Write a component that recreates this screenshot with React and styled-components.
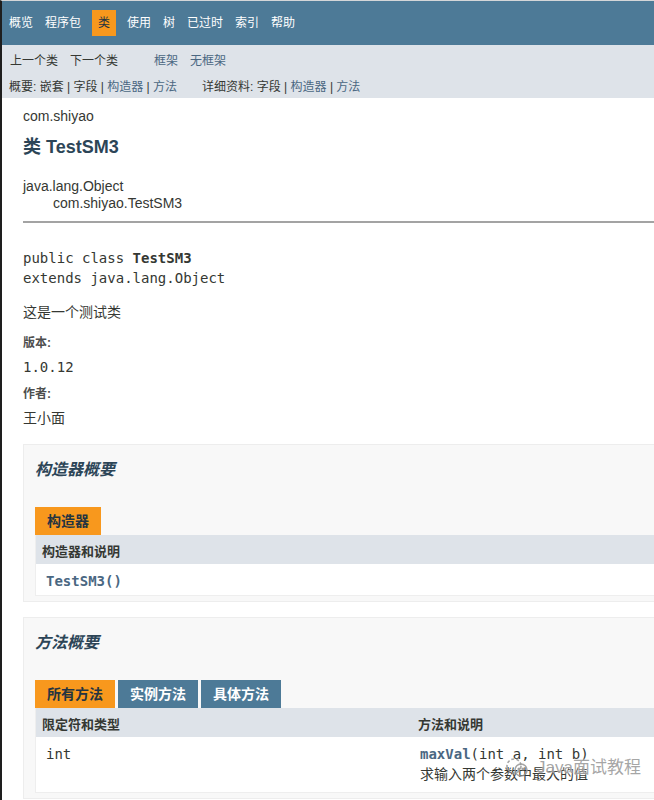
import React from "react";
import styled, { createGlobalStyle } from "styled-components";

const GlobalStyle = createGlobalStyle`
  html, body {
    margin: 0;
    padding: 0;
    overflow-x: hidden;
    background: #ffffff;
  }
`;

const sans = `"Liberation Sans", Arial, "Noto Sans CJK SC", sans-serif`;
const mono = `"DejaVu Sans Mono", "Noto Sans CJK SC", monospace`;

const Page = styled.div`
  position: relative;
  min-height: 800px;
  overflow: hidden;
  border-left: 2px solid #1e1e1e;
  border-top: 1px solid #d4d6d8;
  font-family: ${sans};
  font-size: 14px;
  color: #353833;
  background: #ffffff;
`;

const TopNav = styled.ul`
  display: flex;
  align-items: center;
  height: 44px;
  margin: 0;
  padding: 0 0 0 1px;
  list-style: none;
  background: #4d7a97;
`;

const NavItem = styled.li`
  padding: 5px 6px;
  margin: ${(p) => (p.$current ? "0 5px" : "0")};
  font-size: 12px;
  line-height: 16px;
  color: ${(p) => (p.$current ? "#253441" : "#ffffff")};
  background: ${(p) => (p.$current ? "#f8981d" : "transparent")};
`;

const SubNav = styled.div`
  background: #dee3e9;
  padding: 9px 0 3px;
`;

const SubNavRow = styled.div`
  display: flex;
  font-size: 12px;
  line-height: 15px;
  padding-left: ${(p) => p.$indent || 0}px;
  margin-top: ${(p) => p.$gap || 0}px;
`;

const SubNavItem = styled.span`
  padding: 0 6px;
  margin-left: ${(p) => p.$push || 0}px;
  color: ${(p) => (p.$link ? "#4a6782" : "#353833")};
`;

const Group = styled.span`
  margin-left: ${(p) => p.$push || 0}px;
  white-space: pre;
`;

const A = styled.span`
  color: ${(p) => (p.$link ? "#4a6782" : "#353833")};
`;

const Content = styled.main`
  padding: 10px 0 0 21px;
`;

const PackageLabel = styled.div`
  line-height: 16px;
`;

const Title = styled.h2`
  margin: 12px 0 0;
  font-size: 18px;
  line-height: 22px;
  font-weight: bold;
  color: #2c4557;
`;

const Inheritance = styled.div`
  margin-top: 20px;
  line-height: 17px;
`;

const Indent = styled.div`
  padding-left: 30px;
`;

const Rule = styled.hr`
  margin: 9px 0 0;
  border: none;
  border-top: 2px solid #a3a3a3;
  height: 0;
`;

const Signature = styled.pre`
  margin: 25px 0 0;
  font-family: ${mono};
  font-size: 14px;
  line-height: 20px;
  color: #353833;

  b {
    font-weight: bold;
  }
`;

const Para = styled.div`
  margin-top: ${(p) => p.$gap || 0}px;
  line-height: 20px;
`;

const Term = styled.div`
  margin-top: ${(p) => p.$gap || 0}px;
  font-size: 12px;
  line-height: 16px;
  font-weight: bold;
  color: #4e4e4e;
`;

const Code = styled.div`
  margin-top: 6px;
  font-family: ${mono};
  font-size: 14px;
  line-height: 20px;
`;

const SummaryBlock = styled.section`
  margin-top: ${(p) => p.$gap}px;
  padding: 15px 0 5px 11px;
  border: 1px solid #ededed;
  border-right: none;
  background: #f8f8f8;
`;

const BlockTitle = styled.h3`
  margin: 0;
  font-size: 16px;
  line-height: 20px;
  font-style: italic;
  font-weight: bold;
  color: #2c4557;
`;

const TabRow = styled.div`
  display: flex;
  gap: 3px;
  margin-top: 27px;
`;

const Tab = styled.span`
  padding: 5px 12px;
  font-size: 14px;
  line-height: 18px;
  font-weight: bold;
  color: ${(p) => (p.$active ? "#253441" : "#ffffff")};
  background: ${(p) => (p.$active ? "#f8981d" : "#4d7a97")};
`;

const SummaryTable = styled.div`
  display: grid;
  grid-template-columns: ${(p) => p.$cols};
  border: 1px solid #eeeeee;
  border-top: none;
  border-right: none;
  background: #ffffff;
`;

const HeaderCell = styled.div`
  padding: 8px 0 4px ${(p) => p.$pad}px;
  font-size: 13px;
  line-height: 17px;
  font-weight: bold;
  color: #353833;
  background: #dee3e9;
`;

const Cell = styled.div`
  padding: 8px 0 ${(p) => p.$bottom || 5}px ${(p) => p.$pad}px;
  font-family: ${mono};
  font-size: 14px;
  line-height: 18px;
`;

const Member = styled.span`
  font-weight: bold;
  color: #4a6782;
`;

const Desc = styled.div`
  font-family: ${sans};
  font-size: 14px;
  line-height: 22px;
`;

const Watermark = styled.div`
  position: absolute;
  left: 503px;
  top: 756px;
  display: flex;
  align-items: center;
  gap: 6px;
  font-family: ${sans};
  font-size: 17px;
  line-height: 22px;
  color: rgba(150, 150, 150, 0.85);
  text-shadow: 0 0 2px rgba(255, 255, 255, 0.9);
  pointer-events: none;
`;

const navItems = ["概览", "程序包", "类", "使用", "树", "已过时", "索引", "帮助"];

export default function App() {
  return (
    <>
      <GlobalStyle />
      <Page>
        <TopNav>
          {navItems.map((item) => (
            <NavItem key={item} $current={item === "类"}>
              {item}
            </NavItem>
          ))}
        </TopNav>

        <SubNav>
          <SubNavRow $indent={2}>
            <SubNavItem>上一个类</SubNavItem>
            <SubNavItem>下一个类</SubNavItem>
            <SubNavItem $push={24} $link>框架</SubNavItem>
            <SubNavItem $link>无框架</SubNavItem>
          </SubNavRow>
          <SubNavRow $indent={7} $gap={11}>
            <Group>
              概要: 嵌套 | 字段 | <A $link>构造器</A> | <A $link>方法</A>
            </Group>
            <Group $push={25}>
              详细资料: 字段 | <A $link>构造器</A> | <A $link>方法</A>
            </Group>
          </SubNavRow>
        </SubNav>

        <Content>
          <PackageLabel>com.shiyao</PackageLabel>
          <Title>类 TestSM3</Title>
          <Inheritance>
            <div>java.lang.Object</div>
            <Indent>com.shiyao.TestSM3</Indent>
          </Inheritance>
          <Rule />

          <Signature>
            public class <b>TestSM3</b>
            {"\n"}extends java.lang.Object
          </Signature>
          <Para $gap={14}>这是一个测试类</Para>

          <Term $gap={13}>版本:</Term>
          <Code>1.0.12</Code>
          <Term $gap={9}>作者:</Term>
          <Para $gap={6}>王小面</Para>

          <SummaryBlock $gap={16}>
            <BlockTitle>构造器概要</BlockTitle>
            <TabRow>
              <Tab $active>构造器</Tab>
            </TabRow>
            <SummaryTable $cols="1fr">
              <HeaderCell $pad={6}>构造器和说明</HeaderCell>
              <Cell $pad={10}>
                <Member>TestSM3()</Member>
              </Cell>
            </SummaryTable>
          </SummaryBlock>

          <SummaryBlock $gap={15}>
            <BlockTitle>方法概要</BlockTitle>
            <TabRow>
              <Tab $active>所有方法</Tab>
              <Tab>实例方法</Tab>
              <Tab>具体方法</Tab>
            </TabRow>
            <SummaryTable $cols="375px 1fr">
              <HeaderCell $pad={6}>限定符和类型</HeaderCell>
              <HeaderCell $pad={7}>方法和说明</HeaderCell>
              <Cell $pad={10} $bottom={7}>int</Cell>
              <Cell $pad={9} $bottom={7}>
                <Member>maxVal</Member>(int a, int b)
                <Desc>求输入两个参数中最大的值</Desc>
              </Cell>
            </SummaryTable>
          </SummaryBlock>
        </Content>

        <Watermark>
          <svg width="26" height="22" viewBox="0 0 26 22" fill="none" stroke="currentColor" strokeWidth="1.6">
            <circle cx="9" cy="9" r="7" strokeDasharray="3 2" />
            <circle cx="16" cy="13" r="6" />
            <circle cx="14" cy="12" r="0.8" fill="currentColor" />
            <circle cx="18" cy="12" r="0.8" fill="currentColor" />
          </svg>
          <span>Java面试教程</span>
        </Watermark>
      </Page>
    </>
  );
}
